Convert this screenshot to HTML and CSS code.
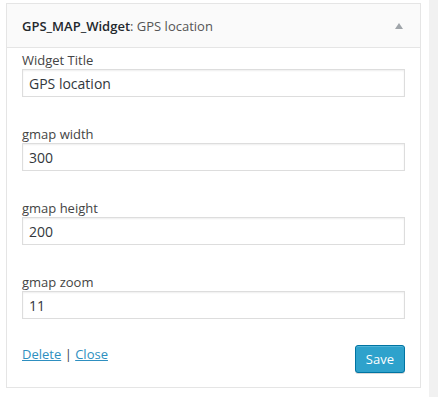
FILE: index.html
```html
<!DOCTYPE html>
<html lang="en">
<head>
    <meta charset="UTF-8">
    <title>GPS_MAP_Widget</title>
    <link rel="stylesheet" href="styles.css">
</head>
<body>
    <div class="page">
        <div class="sidebar">
            <div class="widget">
                <!-- Widget header -->
                <div class="widget-top">
                    <h3 class="widget-title"><strong>GPS_MAP_Widget</strong>: GPS location</h3>
                    <span class="toggle"></span>
                </div>

                <!-- Widget form -->
                <form class="widget-inside">
                    <div class="field">
                        <label for="title">Widget Title</label>
                        <input type="text" id="title" value="GPS location">
                    </div>
                    <div class="field">
                        <label for="width">gmap width</label>
                        <input type="text" id="width" value="300">
                    </div>
                    <div class="field">
                        <label for="height">gmap height</label>
                        <input type="text" id="height" value="200">
                    </div>
                    <div class="field">
                        <label for="zoom">gmap zoom</label>
                        <input type="text" id="zoom" value="11">
                    </div>

                    <div class="widget-control">
                        <div class="links">
                            <a href="#">Delete</a> | <a href="#">Close</a>
                        </div>
                        <button type="submit" class="save">Save</button>
                    </div>
                </form>
            </div>
        </div>
        <div class="edge"></div>
    </div>
</body>
</html>
```

FILE: styles.css
```css
body {
    margin: 0;
    font-family: "Open Sans", sans-serif;
    font-size: 13px;
    color: #444;
    background: #fff;
}

.page {
    display: flex;
    height: 397px;
}

.sidebar {
    width: 429px;
    padding: 3px 0 0 6px;
    box-sizing: border-box;
}

/* strip of the admin background on the right */
.edge {
    flex: 1;
    background: #f1f1f1;
}

.widget {
    width: 415px;
    border: 1px solid #e5e5e5;
    box-sizing: border-box;
    background: #fff;
}

.widget-top {
    display: flex;
    justify-content: space-between;
    align-items: center;
    height: 43px;
    padding: 0 17px 0 15px;
    background: #fafafa;
    border-bottom: 1px solid #e5e5e5;
}

.widget-title {
    margin: 0;
    font-size: 13px;
    font-weight: normal;
    color: #555;
}

.widget-title strong {
    font-weight: 600;
    color: #23282d;
}

.toggle {
    width: 0;
    height: 0;
    border-left: 4px solid transparent;
    border-right: 4px solid transparent;
    border-bottom: 6px solid #a0a5aa;
}

.widget-inside {
    padding: 3px 15px 14px;
}

.field {
    margin-bottom: 28px;
}

.field label {
    display: block;
    line-height: 18px;
    color: #444;
}

.field input {
    display: block;
    width: 100%;
    height: 28px;
    box-sizing: border-box;
    margin: 0;
    padding: 2px 6px;
    border: 1px solid #ddd;
    box-shadow: inset 0 1px 2px rgba(0, 0, 0, 0.07);
    font-family: "Open Sans", sans-serif;
    font-size: 14px;
    color: #32373c;
    background: #fff;
}

.widget-control {
    display: flex;
    justify-content: space-between;
    align-items: flex-start;
    margin-top: -2px;
}

.links {
    line-height: 18px;
    color: #444;
}

.links a {
    color: #0073aa;
    color: #2e8fc0;
}

.save {
    height: 28px;
    padding: 0 10px 1px;
    font-family: "Open Sans", sans-serif;
    font-size: 13px;
    color: #fff;
    background: #2ea2cc;
    border: 1px solid #0074a2;
    border-radius: 3px;
    box-shadow: inset 0 1px 0 rgba(120, 200, 230, 0.5), 0 1px 0 rgba(0, 0, 0, 0.15);
    cursor: pointer;
}
```
